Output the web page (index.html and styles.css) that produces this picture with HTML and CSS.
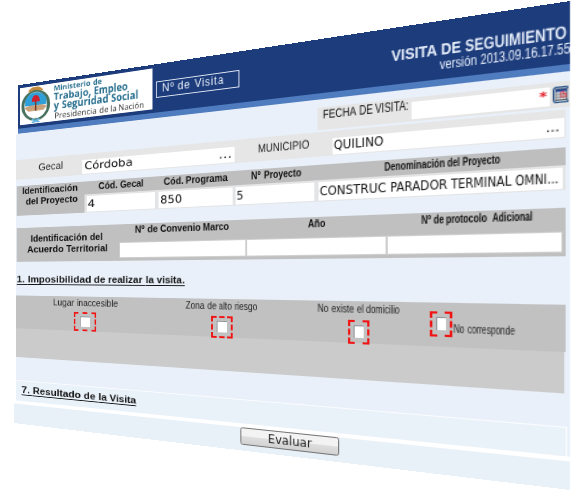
FILE: index.html
```html
<!DOCTYPE html>
<html lang="es">
<head>
<meta charset="utf-8">
<title>Visita de seguimiento</title>
<link rel="stylesheet" href="styles.css">
</head>
<body>
<main class="sheet" id="sheet">
  <header class="header">
    <div class="logo">
      <svg class="emblem" viewBox="0 0 24 40" preserveAspectRatio="none">
        <ellipse cx="12" cy="21" rx="10.3" ry="15.5" fill="#d9eaf5" stroke="#47705c" stroke-width="2.4"/>
        <path d="M3.5 21V15Q6 7 12 7t8.500 8v6z" fill="#2e9fd8"/>
        <path d="M3.500 22h17v5q-3 8-8.500 8t-8.500-8z" fill="#fff"/>
        <path d="M3 23q5-4 9-1 4-3 9 1l-3 4H6z" fill="#c9a27c"/>
        <path d="M12 13v14" stroke="#7b3c26" stroke-width="1.300"/>
        <path d="M9 17q0-7 3-7t3.500 7z" fill="#d01f2d"/>
        <path d="M6 6q1-5 6-5t6 5q-6-3-12 0z" fill="#c58b3c"/>
        <path d="M9 36l6 4m0-4l-6 4" stroke="#62b5de" stroke-width="1.800"/>
      </svg>
      <div class="logo-text">
        <span class="label ministry" data-from="54" data-to="101.5">Ministerio de</span>
        <span class="label brand" data-from="54" data-to="128">Trabajo, Empleo</span>
        <span class="label brand" data-from="54" data-to="138">y Seguridad Social</span>
        <span class="label presidency" data-from="54.5" data-to="144.500">Presidencia de la Nación</span>
      </div>
    </div>
    <div class="visit-number"><span class="label" data-from="161.5" data-to="224">Nº de Visita</span></div>
    <div class="title">
      <span class="label title-main" data-from="391.5" data-to="567">VISITA DE SEGUIMIENTO</span>
      <span class="label title-version" data-from="440" data-to="570.500">versión 2013.09.16.17.55</span>
    </div>
  </header>

  <section class="form">
    <div class="date-row">
      <div class="date-label"><span class="label" data-from="323" data-to="408.500">FECHA DE VISITA:</span></div>
      <div class="field date-field"><span class="required">*</span></div>
      <svg class="calendar" viewBox="0 0 17 16" preserveAspectRatio="none">
        <rect x=".8" y=".8" width="15.400" height="14.400" rx="3" fill="#dce8f2" stroke="#335a8a" stroke-width="1.600"/>
        <rect x="3" y="3" width="11" height="10" fill="#fff" stroke="#2d3138" stroke-width=".8"/>
        <rect x="3" y="3" width="11" height="2.200" fill="#1d3f9b"/>
        <path d="M3 7.700h11M3 10.300h11M5.800 5v8M8.500 5v8M11.300 5v8" stroke="#666b75" stroke-width=".7"/>
        <path d="M8.500 5.500h2.800v2.200h2v2.600H8.500z" fill="none" stroke="#e0303a" stroke-width="1.100"/>
      </svg>
    </div>

    <div class="place-row">
      <div class="place-label"><span class="label" data-from="38.500" data-to="63">Gecal</span></div>
      <div class="field">
        <span class="label" data-from="84.500" data-to="132.800">Córdoba</span>
        <span class="label" data-from="219" data-to="232.500">...</span>
      </div>
      <div class="place-label municipality"><span class="label" data-from="258" data-to="309.500">MUNICIPIO</span></div>
      <div class="field">
        <span class="label" data-from="333.500" data-to="383.500">QUILINO</span>
        <span class="label" data-from="546" data-to="560">...</span>
      </div>
    </div>

    <div class="project">
      <div class="row-title project-title">
        <span class="label" data-from="22" data-to="77.500">Identificación</span>
        <span class="label" data-from="25.500" data-to="77.500">del Proyecto</span>
      </div>
      <div class="column">
        <div class="column-head"><span class="label" data-from="98.500" data-to="143.500">Cód. Gecal</span></div>
        <div class="field"><span class="label" data-from="87.500" data-to="95">4</span></div>
      </div>
      <div class="column">
        <div class="column-head"><span class="label" data-from="163.300" data-to="228">Cód. Programa</span></div>
        <div class="field"><span class="label" data-from="160" data-to="182">850</span></div>
      </div>
      <div class="column">
        <div class="column-head"><span class="label" data-from="251.500" data-to="301">Nº Proyecto</span></div>
        <div class="field"><span class="label" data-from="237" data-to="244">5</span></div>
      </div>
      <div class="column">
        <div class="column-head"><span class="label" data-from="384" data-to="500">Denominación del Proyecto</span></div>
        <div class="field"><span class="label" data-from="319.500" data-to="559">CONSTRUC PARADOR TERMINAL OMNI...</span></div>
      </div>
    </div>

    <div class="agreement">
      <div class="row-title agreement-title">
        <span class="label" data-from="31" data-to="102.800">Identificación del</span>
        <span class="label" data-from="27.300" data-to="108">Acuerdo Territorial</span>
      </div>
      <div class="column">
        <div class="column-head"><span class="label" data-from="135" data-to="229.500">Nº de Convenio Marco</span></div>
        <div class="field"></div>
      </div>
      <div class="column">
        <div class="column-head"><span class="label" data-from="308" data-to="325.500">Año</span></div>
        <div class="field"></div>
      </div>
      <div class="column">
        <div class="column-head"><span class="label" data-from="421" data-to="532.500">Nº de protocolo  Adicional</span></div>
        <div class="field"></div>
      </div>
    </div>

    <h2 class="heading"><span class="label" data-from="16.600" data-to="184.500">1. Imposibilidad de realizar la visita.</span></h2>

    <div class="reasons">
      <div class="reason">
        <span class="label" data-from="53.300" data-to="118">Lugar inaccesible</span>
        <span class="check check-access"><i></i></span>
      </div>
      <div class="reason">
        <span class="label" data-from="185.800" data-to="257.300">Zona de alto riesgo</span>
        <span class="check check-risk"><i></i></span>
      </div>
      <div class="reason">
        <span class="label" data-from="318" data-to="399.300">No existe el domicilio</span>
        <span class="check check-address"><i></i></span>
      </div>
      <div class="reason reason-inline">
        <span class="check check-none"><i></i></span>
        <span class="label" data-from="453.800" data-to="514.500">No corresponde</span>
      </div>
    </div>
    <div class="reasons-extra"></div>

    <div class="result">
      <h2 class="heading-result"><span class="label" data-from="21.800" data-to="136">7. Resultado de la Visita</span></h2>
    </div>
  </section>

  <footer class="footer">
    <button class="evaluate" type="button"><span class="label" data-from="268" data-to="312">Evaluar</span></button>
  </footer>
</main>
<script src="labels.js"></script>
</body>
</html>
```
FILE: labels.js
```js
(function () {
  var sheet = document.getElementById("sheet");
  var LEFT = 16, SCALE = 0.69059, FALLOFF = 0.0005585;

  function flat(x) {
    var d = x - LEFT;
    return d / (SCALE + FALLOFF * d);
  }

  document.querySelectorAll(".label").forEach(function (label) {
    var words = label.textContent.match(/\S+\s*/g);
    label.textContent = "";
    var spans = words.map(function (word) {
      var span = document.createElement("span");
      span.className = "word";
      span.textContent = word;
      label.appendChild(span);
      return span;
    });
    var widths = spans.map(function (s) { return s.getBoundingClientRect().width; });
    var total = widths.reduce(function (a, b) { return a + b; }, 0);
    var from = Number(label.dataset.from), to = Number(label.dataset.to);
    var origin = sheet.getBoundingClientRect().left;
    var start = flat(from);
    label.style.marginLeft = start - (label.getBoundingClientRect().left - origin) + "px";
    label.style.width = flat(to) - start + "px";
    var done = 0;
    spans.forEach(function (span, i) {
      var a = flat(from + (to - from) * done / total);
      done += widths[i];
      var b = flat(from + (to - from) * done / total);
      span.style.transform = "scaleX(" + (b - a) / widths[i] + ")";
      span.style.marginRight = b - a - widths[i] + "px";
    });
  });
  sheet.classList.add("tilted");
})();
```
FILE: styles.css
```css
* { box-sizing: border-box; }
body {
  margin: 0;
  width: 575px;
  height: 492px;
  overflow: hidden;
  background: #fff;
  color: #111;
  font-family: "Liberation Sans", Arial, sans-serif;
}
.sheet {
  width: 554px;
  height: 412px;
  display: flex;
  flex-direction: column;
  transform-origin: 0 0;
}
.tilted {
  transform: matrix3d(.68165, -.153265, 0, -.0005585, 0, .81966, 0, 0, 0, 0, 1, 0, 16, 85.6, 0, 1);
}
.label { display: block; white-space: nowrap; flex: none; }
.word { display: inline-block; white-space: pre; transform-origin: 0 0; }

.header {
  flex: none;
  display: flex;
  align-items: flex-start;
  height: 58.500px;
  margin-left: 3px;
  background: #1d3c7c;
  border-bottom: 6px solid #4f7bbf;
}
.logo {
  flex: none;
  display: flex;
  width: 171.600px;
  height: 45.300px;
  margin: 4px 0 0 3px;
  background: #fff;
}
.emblem { flex: none; width: 42px; height: 44px; margin: 0 0 0 1px; }
.logo-text { flex: 1; min-width: 0; padding-top: .5px; color: #28708f; font-family: "Open Sans", "Noto Sans", sans-serif; font-weight: 700; }
.ministry { font-size: 8.500px; line-height: 9px; }
.brand { font-size: 11.500px; line-height: 11.300px; }
.presidency { color: #333; font-size: 9.500px; font-weight: 400; line-height: 14px; }
.visit-number {
  flex: none;
  width: 91.500px;
  height: 17.500px;
  margin: 19px 0 0 4.700px;
  border: 1px solid #dfe6f2;
  color: #e8eef8;
  font-size: 12px;
  line-height: 15.500px;
}
.visit-number .label { letter-spacing: .8px; }
.title { flex: 1; min-width: 0; padding-top: 17.500px; color: #e6eefa; }
.title-main { font-size: 15.200px; font-weight: 700; line-height: 16px; }
.title-version { font-size: 12px; line-height: 13px; }

.form { flex: none; height: 325.500px; background: #e9f0f9; overflow: hidden; }
.field {
  height: 15.500px;
  background: #fff;
  font-family: "DejaVu Sans", Verdana, sans-serif;
  font-size: 12px;
  line-height: 14px;
}
.date-row {
  display: flex;
  height: 22px;
  margin: 8.500px 0 0 350.500px;
  background: #e6e6e7;
}
.date-label { flex: none; width: 83px; font-size: 12px; line-height: 15.500px; }
.date-field { flex: none; width: 106.500px; margin-top: 4px; text-align: right; }
.required { color: #e2202a; font-size: 11px; font-weight: 700; line-height: 15px; padding-right: 2px; }
.calendar { flex: none; width: 11.800px; height: 14.200px; margin: 4px 0 0 1.500px; }

.place-row {
  display: grid;
  grid-template-columns: 90.700px 178.600px 95.800px 184.800px;
  height: 23.500px;
  width: 551px;
  margin-top: 2px;
  background: #e6e6e7;
}
.place-row .field { display: flex; margin-top: 7px; }
.place-label { padding-top: 4px; font-size: 12px; line-height: 14px; color: #222; }

.project {
  display: grid;
  grid-template-columns: 94.300px 88px 85.500px 81.600px 200.800px;
  width: 550.200px;
  height: 36.500px;
  margin: 8px 0 0 1px;
  background: #e3e4e6;
  font-size: 11.300px;
}
.row-title { background: #bebebe; font-weight: 700; }
.project-title { margin-right: 1px; padding-top: .5px; line-height: 12.600px; }
.column { min-width: 0; }
.column-head { height: 15px; background: #bebebe; font-weight: 700; line-height: 13px; }
.project .column-head { margin-left: -1.300px; }
.project .field { height: 18px; margin: 2px 2px 0 1.300px; line-height: 18px; }

.agreement {
  display: grid;
  grid-template-columns: 138px 143.200px 132px 136px;
  width: 550.200px;
  height: 41.500px;
  margin: 14.500px 0 0 1px;
  background: #c0c0c0;
  font-size: 11.300px;
}
.agreement .column-head { height: 21.500px; background: none; line-height: 13.500px; }
.agreement .field { height: 15.500px; margin-right: 2px; outline: 1px solid #cfcfcf; }
.agreement-title { padding-top: 7.500px; line-height: 13px; background: none; }

.heading, .heading-result {
  margin: 0;
  font-size: 10.800px;
  font-weight: 700;
  line-height: 12px;
}
.heading { height: 40.500px; padding-top: 15px; }
.heading .word, .heading-result .word { text-decoration: underline; text-decoration-thickness: 1px; text-underline-offset: 1.500px; }

.reasons {
  display: grid;
  grid-template-columns: 170px 145px 120px 114px;
  width: 550.500px;
  height: 40.500px;
  background: #c1c1c1;
  color: #222;
  font-size: 11.300px;
}
.reason { padding-top: 1px; }
.reason > .label { line-height: 13px; }
.check { display: flex; height: 22.500px; border: 2px dashed #f01414; }
.check i { width: 55%; height: 12px; margin: auto; background: #fff; border: solid #92979d; border-width: 1px 0 0 1px; }
.check-access { width: 28.600px; margin: 4px 0 0 80.200px; }
.check-risk { width: 23.400px; margin: 4.500px 0 0 73.900px; }
.check-address { width: 19.600px; margin: 4.700px 0 0 63.500px; }
.reason-inline { display: flex; padding-top: 8.500px; }
.check-none { flex: none; width: 17.700px; margin-left: 14.100px; }
.reason-inline > .label { line-height: 30px; }
.reasons-extra { width: 549.500px; height: 35.300px; background: #cbcbcb; }

.result {
  width: 551.500px;
  height: 30px;
  margin-top: 27.500px;
  border-top: 1px solid #fafcff;
  border-right: 1px solid #fafcff;
  background: #e9f1f9;
}
.heading-result { padding-top: 4px; }

.footer {
  flex: none;
  height: 24px;
  margin: 4px 0 0 -3px;
  background: #e9f1f8;
}
.evaluate {
  display: block;
  width: 96px;
  height: 17.500px;
  margin-left: 278.300px;
  padding: 0;
  border: 1px solid #737373;
  border-radius: 2.500px;
  background: linear-gradient(#f3f3f3 0 48%, #dedede 52%, #d2d2d2);
  color: #222;
  font-family: "DejaVu Sans", Verdana, sans-serif;
  font-size: 12px;
  line-height: 14.500px;
  text-align: left;
}
```
